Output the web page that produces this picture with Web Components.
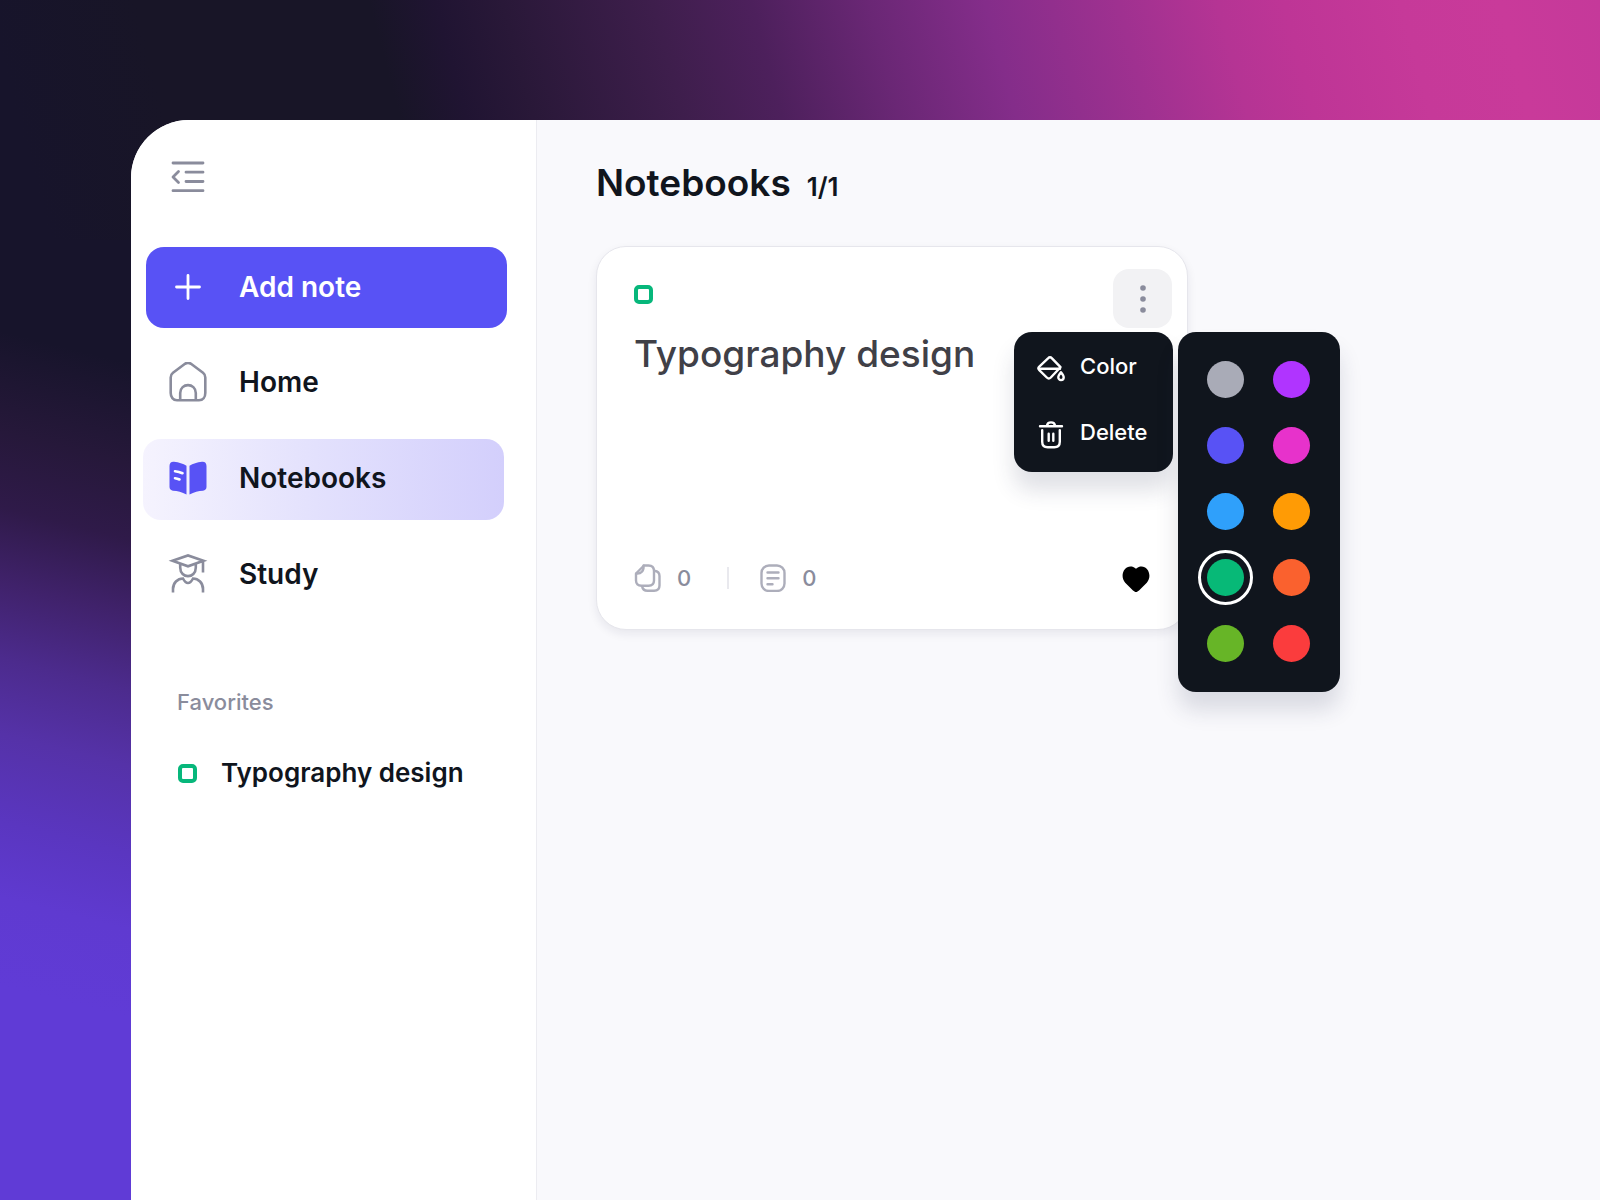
<!DOCTYPE html>
<html lang="en">
  <head>
    <meta charset="UTF-8" />
    <meta name="viewport" content="width=device-width, initial-scale=1.0" />
    <title>Notebooks</title>
    <style>
      html,
      body {
        height: 100%;
      }
      body {
        margin: 0;
        font-family: Inter, "Liberation Sans", sans-serif;
        color: #10151d;
        --muted: #8a8c9c;
        --primary: #5852f5;
        --ink: #10151d;
        --green: #07b77b;
      }
    </style>
  </head>
  <body>
    <notes-app>
      <side-bar slot="sidebar">
        <add-button>Add note</add-button>
        <nav-item icon="home">Home</nav-item>
        <nav-item icon="book" active>Notebooks</nav-item>
        <nav-item icon="study">Study</nav-item>
        <favorite-item slot="favorites">Typography design</favorite-item>
      </side-bar>
      <page-header count="1/1">Notebooks</page-header>
      <notebook-card pages="0" notes="0">
        Typography design
        <action-menu slot="menu"></action-menu>
      </notebook-card>
    </notes-app>

    <script>
      const icons = {
        collapse: `<svg width="40" height="40" viewBox="0 0 40 40" fill="none" stroke="currentColor" stroke-width="2.800" stroke-linecap="round" stroke-linejoin="round"><path d="M5 6h30M18 15.200h17M18 24.500h17M5 33.700h30M10.500 14.500L5 20l5.500 5.500"/></svg>`,
        plus: `<svg width="40" height="40" viewBox="0 0 40 40" fill="none" stroke="currentColor" stroke-width="2.800" stroke-linecap="round"><path d="M20 8.500v23M8.500 20h23"/></svg>`,
        home: `<svg width="40" height="40" viewBox="0 0 40 40" fill="none" stroke="currentColor" stroke-width="2.600"><path d="M17 1.800c2-1.300 4-1.300 6 0l12 9c1.500 1.200 2.300 2.600 2.300 4.600V31c0 4-2.300 7.200-6.300 7.200H9c-4 0-6.300-3.200-6.300-7.200V15.400c0-2 .8-3.400 2.300-4.600z"/><path d="M12.200 38V31c0-10.500 15.600-10.500 15.600 0V38"/></svg>`,
        book: `<svg width="40" height="40" viewBox="0 0 40 40"><path fill="currentColor" d="M1.500 8c0-3 1.800-4.500 4.500-4.200 5 .5 9 1.900 12.500 4v28.700C14 34 9.500 33 5 32.700c-2-.2-3.500-1.700-3.500-3.700zM38.500 8c0-3-1.800-4.500-4.500-4.200-5 .5-9 1.900-12.500 4v28.700c4.500-2.500 9-3.500 13.500-3.800 2-.2 3.500-1.700 3.500-3.700z"/><path d="M7 13.200q4 .4 7.500 2M7 20.200q2.200.2 4.500 1.300" fill="none" stroke="#fff" stroke-width="2.600" stroke-linecap="round"/></svg>`,
        study: `<svg width="40" height="40" viewBox="0 0 40 40" fill="none" stroke="currentColor" stroke-width="2.600"><path d="M4.500 6.800L20 1.400l15.500 5.400L20 12.300zM35 7v11.500M12.200 9.500v4c0 11.500 15.600 11.500 15.600 0v-4"/><path d="M5 38.500V35c0-6 4.500-10.500 10-10.500 1.500 3 3.300 4.500 5 4.500s3.500-1.500 5-4.500c5.500 0 10 4.500 10 10.500v3.500"/></svg>`,
        pages: `<svg width="28" height="28" viewBox="0 0 28 28" fill="none" stroke="currentColor" stroke-width="2.400" stroke-linecap="round" stroke-linejoin="round"><path d="M10 1.500h4.500c3.600 0 5.500 1.900 5.500 5.500v9.500c0 3.400-1.900 5.300-5.500 5.300H7.500c-3.600 0-5.500-1.900-5.500-5.300V9.500z"/><path d="M2.500 9.500c4.500.5 7.500-2.500 7-8"/><path d="M20.500 6.700c3.300.4 5 2.300 5 5.300v9.500c0 3.400-1.800 5.300-5.400 5.300h-6.600c-3 0-4.900-1.300-5.400-4.500"/></svg>`,
        notes: `<svg width="28" height="28" viewBox="0 0 28 28" fill="none" stroke="currentColor" stroke-width="2.400" stroke-linecap="round"><rect x="2.500" y="1.500" width="23" height="25.500" rx="7.500"/><path d="M8.500 8.500h11M8.500 14.300h11M8.500 20.200h5"/></svg>`,
        heart: `<svg width="28" height="28" viewBox="0 0 28 28"><path fill="currentColor" d="M14 28c-1 0-2-.6-3-1.500L3.200 18.800C-4 10 5-2.500 14 4.700 23-2.500 32 10 24.800 18.800L17 26.500c-1 .9-2 1.500-3 1.500z"/></svg>`,
        dots: `<svg width="28" height="28" viewBox="0 0 28 28" fill="currentColor"><circle cx="14" cy="3" r="2.800"/><circle cx="14" cy="14" r="2.800"/><circle cx="14" cy="25" r="2.800"/></svg>`,
        fill: `<svg width="30" height="30" viewBox="0 0 30 30" fill="none" stroke="currentColor" stroke-width="2.400" stroke-linecap="round" stroke-linejoin="round"><path d="M12 5.300c1.300-1.300 2.700-1.300 4 0l8.500 8.900L14.800 24.500c-1.300 1.300-2.700 1.300-4 0l-7.500-7.300c-1.300-1.300-1.300-2.400 0-3.600z"/><path d="M3 15.700h21"/><path d="M25 19.200c-2.200 2.800-2.700 4-2.700 5a2.700 2.900 0 0 0 5.400 0c0-1-.5-2.200-2.700-5z"/></svg>`,
        trash: `<svg width="30" height="30" viewBox="0 0 30 30" fill="none" stroke="currentColor" stroke-width="2.400" stroke-linecap="round" stroke-linejoin="round"><path d="M4 7.200h22M11 6.700c.5-4.500 7.500-4.500 8 0M6.200 11.200V22.700c0 3.500 2 5.500 5.500 5.500h6.600c3.500 0 5.500-2 5.500-5.500V11.200M12.700 14.700v7M17.300 14.700v7"/></svg>`,
      };

      const base = `
        * { box-sizing: border-box; }
        svg { display: block; flex: none; }
        button { font: inherit; color: inherit; border: 0; padding: 0; background: none; cursor: pointer; }
      `;

      // Small helper: every element here renders once from its own markup
      class BaseElement extends HTMLElement {
        connectedCallback() {
          if (this.shadowRoot) return;
          this.attachShadow({ mode: "open" });
          this.shadowRoot.innerHTML = `<style>${base}</style>${this.markup()}`;
          this.ready();
        }
        ready() {}
      }

      // Page frame: gradient backdrop, sidebar and content
      class NotesApp extends BaseElement {
        markup() {
          return `
            <style>
              :host {
                display: flex;
                min-height: 100%;
                box-sizing: border-box;
                padding: 120px 0 0 131px;
                background:
                  linear-gradient(194deg, transparent 31%, #26183a 39%, #2f1a49 45%, #40226b 51%, #4c2b8d 57%, #5532a8 63%, #5a36c0 70%, #5f3ad0 76%, #603bd6 83%) left / 240px 100% no-repeat,
                  linear-gradient(75deg, #17142b 3%, #181527 12%, #181527 26%, #201432 30%, #291838 34%, #3e1e4c 43%, #4d205c 49%, #6a2775 56%, #842d8a 63%, #9f3190 71%, #b53494 77%, #be3596 81%, #c63999 88%, #c93a9a 94%, #c5399a 100%) top / 100% 240px no-repeat,
                  #17142b;
              }
              .window {
                flex: 1;
                display: flex;
                background: #f9f9fc;
                border-top-left-radius: 58px;
                overflow: hidden;
              }
              main { flex: 1; padding: 40px 59px; }
            </style>
            <div class="window">
              <slot name="sidebar"></slot>
              <main><slot></slot></main>
            </div>
          `;
        }
      }

      class SideBar extends BaseElement {
        markup() {
          return `
            <style>
              :host {
                display: block;
                flex: none;
                width: 406px;
                box-sizing: border-box;
                padding: 37px 32px 0 12px;
                background: #fff;
                border-right: 1px solid #ececf1;
              }
              .toggle { display: block; margin-left: 25px; color: var(--muted); }
              nav { display: flex; flex-direction: column; gap: 15px; margin-top: 50px; }
              h2 {
                margin: 70px 0 0 34px;
                font-size: 22px;
                line-height: 32px;
                font-weight: 500;
                color: var(--muted);
              }
              section { margin: 39px 0 0 35px; }
            </style>
            <button class="toggle" aria-label="Collapse sidebar">${icons.collapse}</button>
            <nav><slot></slot></nav>
            <h2>Favorites</h2>
            <section><slot name="favorites"></slot></section>
          `;
        }
      }

      class AddButton extends BaseElement {
        markup() {
          return `
            <style>
              :host { display: block; margin: 0 -3px 0 3px; }
              button {
                display: flex;
                align-items: center;
                gap: 31px;
                width: 100%;
                height: 81px;
                padding: 0 22px 2px;
                border-radius: 18px;
                background: var(--primary);
                color: #fff;
                font-size: 28px;
                font-weight: 600;
              }
            </style>
            <button>${icons.plus}<slot></slot></button>
          `;
        }
      }

      class NavItem extends BaseElement {
        markup() {
          return `
            <style>
              :host { display: block; }
              a {
                display: flex;
                align-items: center;
                gap: 31px;
                height: 81px;
                padding: 0 25px 3px;
                border-radius: 18px;
                color: inherit;
                text-decoration: none;
                font-size: 28px;
                font-weight: 600;
              }
              svg { color: var(--muted); }
              :host([active]) a { background: linear-gradient(90deg, #f5f3fe, #e3e1fd 48%, #d3cffc); }
              :host([active]) svg { color: var(--primary); }
            </style>
            <a href="#">${icons[this.getAttribute("icon")]}<slot></slot></a>
          `;
        }
      }

      class ColorTag extends BaseElement {
        markup() {
          return `
            <style>
              :host {
                display: block;
                flex: none;
                box-sizing: border-box;
                width: 19px;
                height: 19px;
                border: 4px solid var(--green);
                border-radius: 5px;
              }
            </style>
          `;
        }
      }

      class FavoriteItem extends BaseElement {
        markup() {
          return `
            <style>
              :host { display: block; }
              a {
                display: flex;
                align-items: center;
                gap: 24px;
                color: inherit;
                text-decoration: none;
                font-size: 26px;
                line-height: 32px;
                font-weight: 600;
                white-space: nowrap;
              }
            </style>
            <a href="#"><color-tag></color-tag><slot></slot></a>
          `;
        }
      }

      class PageHeader extends BaseElement {
        markup() {
          return `
            <style>
              :host { display: flex; align-items: baseline; gap: 16px; }
              h1 { margin: 0; font-size: 37px; line-height: 46px; font-weight: 600; }
              span { font-size: 26px; font-weight: 600; }
            </style>
            <h1><slot></slot></h1>
            <span>${this.getAttribute("count")}</span>
          `;
        }
      }

      class NotebookCard extends BaseElement {
        markup() {
          return `
            <style>
              :host {
                display: flex;
                flex-direction: column;
                position: relative;
                box-sizing: border-box;
                max-width: 592px;
                min-height: 384px;
                margin-top: 40px;
                padding: 22px 15px 37px 37px;
                background: #fff;
                border: 1px solid #e6e6ec;
                border-radius: 30px;
                box-shadow: 0 4px 10px rgba(30, 30, 60, 0.08);
              }
              .top { display: flex; justify-content: space-between; align-items: flex-start; }
              color-tag { margin-top: 16px; }
              .more {
                display: grid;
                place-items: center;
                width: 59px;
                height: 59px;
                border-radius: 16px;
                background: #f2f2f4;
                color: var(--muted);
              }
              h2 { margin: 3px 0 0; font-size: 37px; line-height: 46px; font-weight: 500; color: #404047; }
              footer {
                display: flex;
                align-items: center;
                margin-top: auto;
                padding-right: 22px;
                font-size: 22px;
                line-height: 28px;
                font-weight: 500;
                color: var(--muted);
              }
              .stat { display: flex; align-items: center; gap: 15px; }
              .stat svg { color: #adaebb; }
              .stat + .stat::before { content: ""; width: 2px; height: 22px; margin: 0 15px 0 36px; background: #e9e9ee; }
              .like { margin-left: auto; color: #000; }
              slot[name="menu"]::slotted(*) { position: absolute; top: 85px; left: 417px; }
            </style>
            <div class="top">
              <color-tag></color-tag>
              <button class="more" aria-label="More">${icons.dots}</button>
            </div>
            <h2><slot></slot></h2>
            <footer>
              <span class="stat">${icons.pages}<span>${this.getAttribute("pages")}</span></span>
              <span class="stat">${icons.notes}<span>${this.getAttribute("notes")}</span></span>
              <button class="like" aria-label="Favorite">${icons.heart}</button>
            </footer>
            <slot name="menu"></slot>
          `;
        }
        ready() {
          const menu = this.querySelector("action-menu");
          this.shadowRoot.querySelector(".more").addEventListener("click", () => {
            menu.hidden = !menu.hidden;
          });
        }
      }

      class ActionMenu extends BaseElement {
        markup() {
          return `
            <style>
              :host { display: flex; align-items: flex-start; gap: 5px; }
              :host([hidden]) { display: none; }
              .menu {
                display: flex;
                flex-direction: column;
                gap: 36px;
                width: 159px;
                padding: 21px 22px 23px;
                border-radius: 18px;
                background: var(--ink);
                color: #fff;
                font-size: 22px;
                line-height: 26px;
                font-weight: 500;
                box-shadow: 0 18px 22px rgba(40, 45, 80, 0.15);
              }
              .menu button { display: flex; align-items: flex-start; gap: 14px; }
            </style>
            <div class="menu">
              <button>${icons.fill}Color</button>
              <button>${icons.trash}Delete</button>
            </div>
            <color-palette></color-palette>
          `;
        }
      }

      class ColorPalette extends BaseElement {
        markup() {
          const colors = [
            ["Gray", "#a9abb7"],
            ["Purple", "#b034ff"],
            ["Indigo", "#5852f5"],
            ["Pink", "#e732cb"],
            ["Blue", "#2fa0fb"],
            ["Amber", "#ff9b05"],
            ["Green", "#07b977"],
            ["Orange", "#fa612e"],
            ["Lime", "#67b527"],
            ["Red", "#fb3c3d"],
          ];
          const swatches = colors
            .map(
              ([name, value]) =>
                `<input type="radio" name="color" aria-label="${name}" style="--swatch: ${value}" ${name === "Green" ? "checked" : ""}>`
            )
            .join("");
          return `
            <style>
              :host {
                display: grid;
                grid-template-columns: repeat(2, 37px);
                gap: 29px;
                padding: 29px 30px 30px 29px;
                border-radius: 18px;
                background: var(--ink);
                box-shadow: 0 18px 22px rgba(40, 45, 80, 0.15);
              }
              input {
                appearance: none;
                width: 37px;
                height: 37px;
                margin: 0;
                border-radius: 50%;
                background: var(--swatch);
                cursor: pointer;
              }
              input:checked { outline: 3px solid #fff; outline-offset: 6px; }
            </style>
            ${swatches}
          `;
        }
      }

      customElements.define("color-tag", ColorTag);
      customElements.define("color-palette", ColorPalette);
      customElements.define("action-menu", ActionMenu);
      customElements.define("notebook-card", NotebookCard);
      customElements.define("page-header", PageHeader);
      customElements.define("favorite-item", FavoriteItem);
      customElements.define("nav-item", NavItem);
      customElements.define("add-button", AddButton);
      customElements.define("side-bar", SideBar);
      customElements.define("notes-app", NotesApp);
    </script>
  </body>
</html>
